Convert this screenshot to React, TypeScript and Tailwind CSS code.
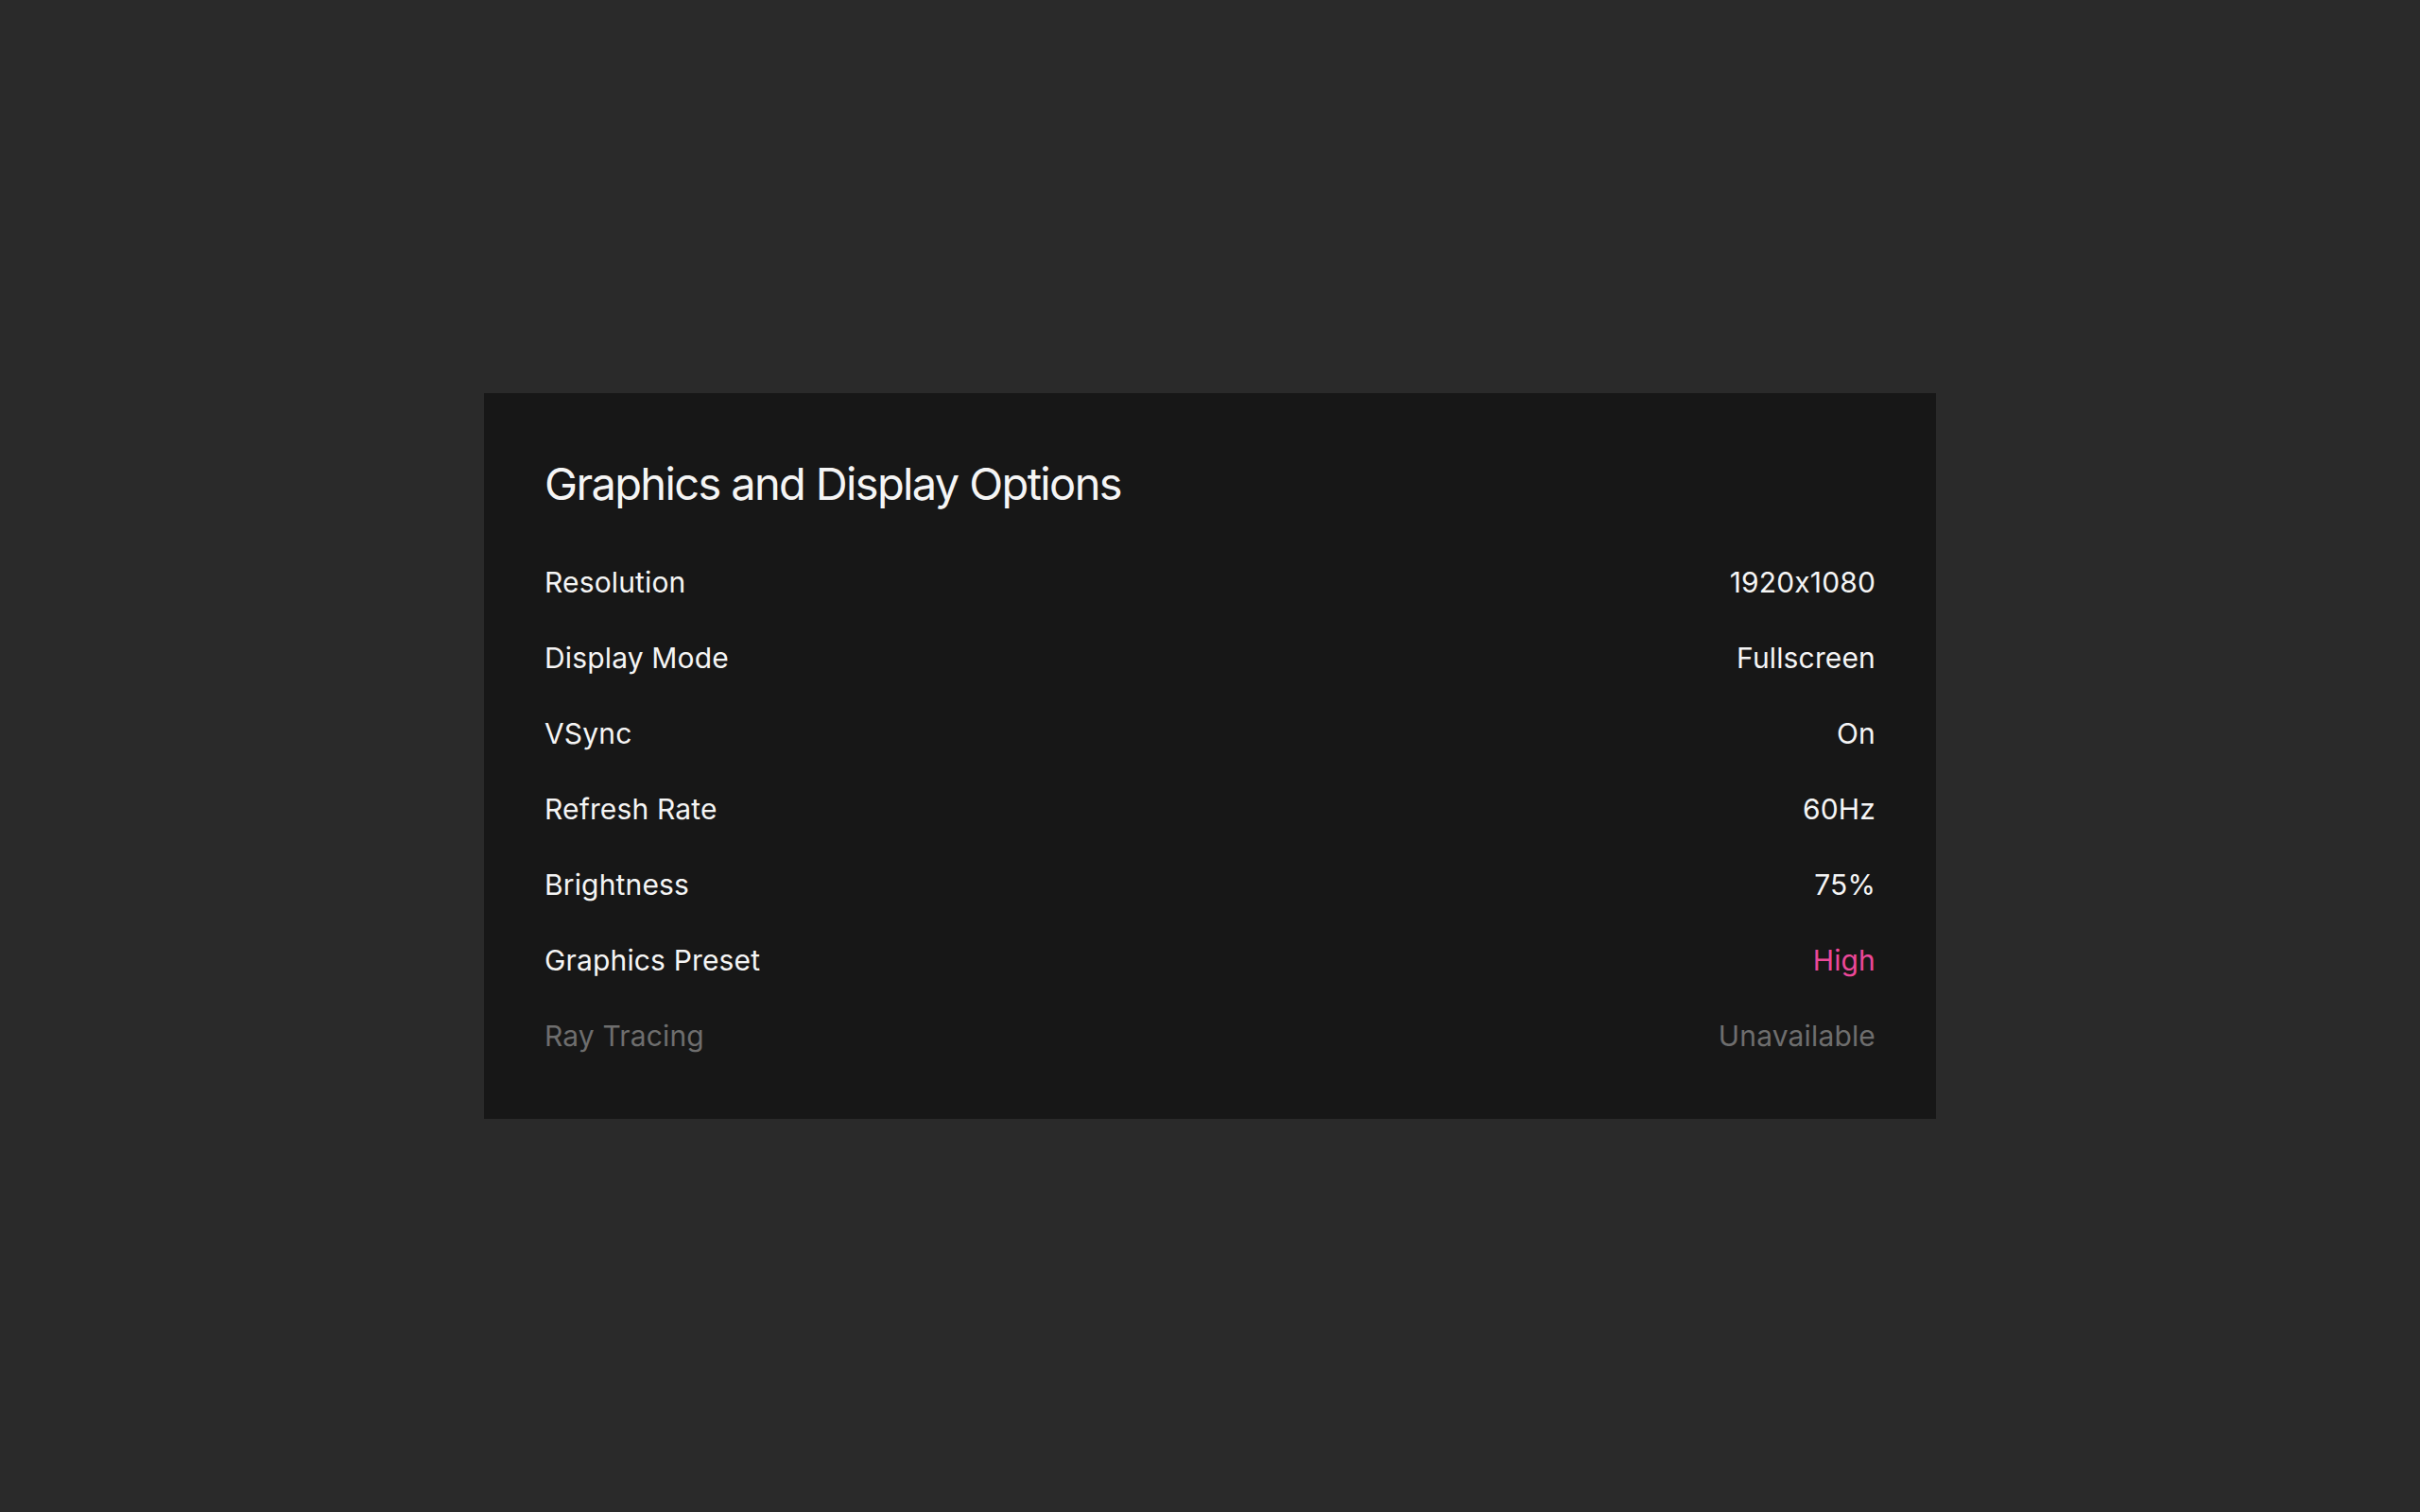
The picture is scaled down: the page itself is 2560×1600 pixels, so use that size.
const options = [
  { label: 'Resolution', value: '1920x1080' },
  { label: 'Display Mode', value: 'Fullscreen' },
  { label: 'VSync', value: 'On' },
  { label: 'Refresh Rate', value: '60Hz' },
  { label: 'Brightness', value: '75%' },
  { label: 'Graphics Preset', value: 'High', highlight: true },
  { label: 'Ray Tracing', value: 'Unavailable', disabled: true },
];

export default function App() {
  return (
    <div
      className="flex min-h-screen items-center justify-center bg-[#2a2a2a] [font-feature-settings:'calt'_0]"
      style={{ fontFamily: 'Inter, "Noto Sans", sans-serif' }}
    >
      <div className="w-[1536px] bg-[#171717] px-16 pt-16 pb-12">
        <h1 className="mb-8 text-[47px] leading-[64px] font-normal tracking-[-0.035em] text-[#f5f5f5]">
          Graphics and Display Options
        </h1>
        <div className="flex flex-col">
          {options.map((opt) => (
            <div
              key={opt.label}
              className="flex h-20 items-center justify-between text-[30px] leading-9 tracking-[0.005em]"
            >
              <span className={opt.disabled ? 'text-[#6e6e6e]' : 'text-[#f5f5f5]'}>{opt.label}</span>
              <span
                className={
                  opt.disabled ? 'text-[#6e6e6e]' : opt.highlight ? 'text-[#ec4899]' : 'text-[#f5f5f5]'
                }
              >
                {opt.value}
              </span>
            </div>
          ))}
        </div>
      </div>
    </div>
  );
}
